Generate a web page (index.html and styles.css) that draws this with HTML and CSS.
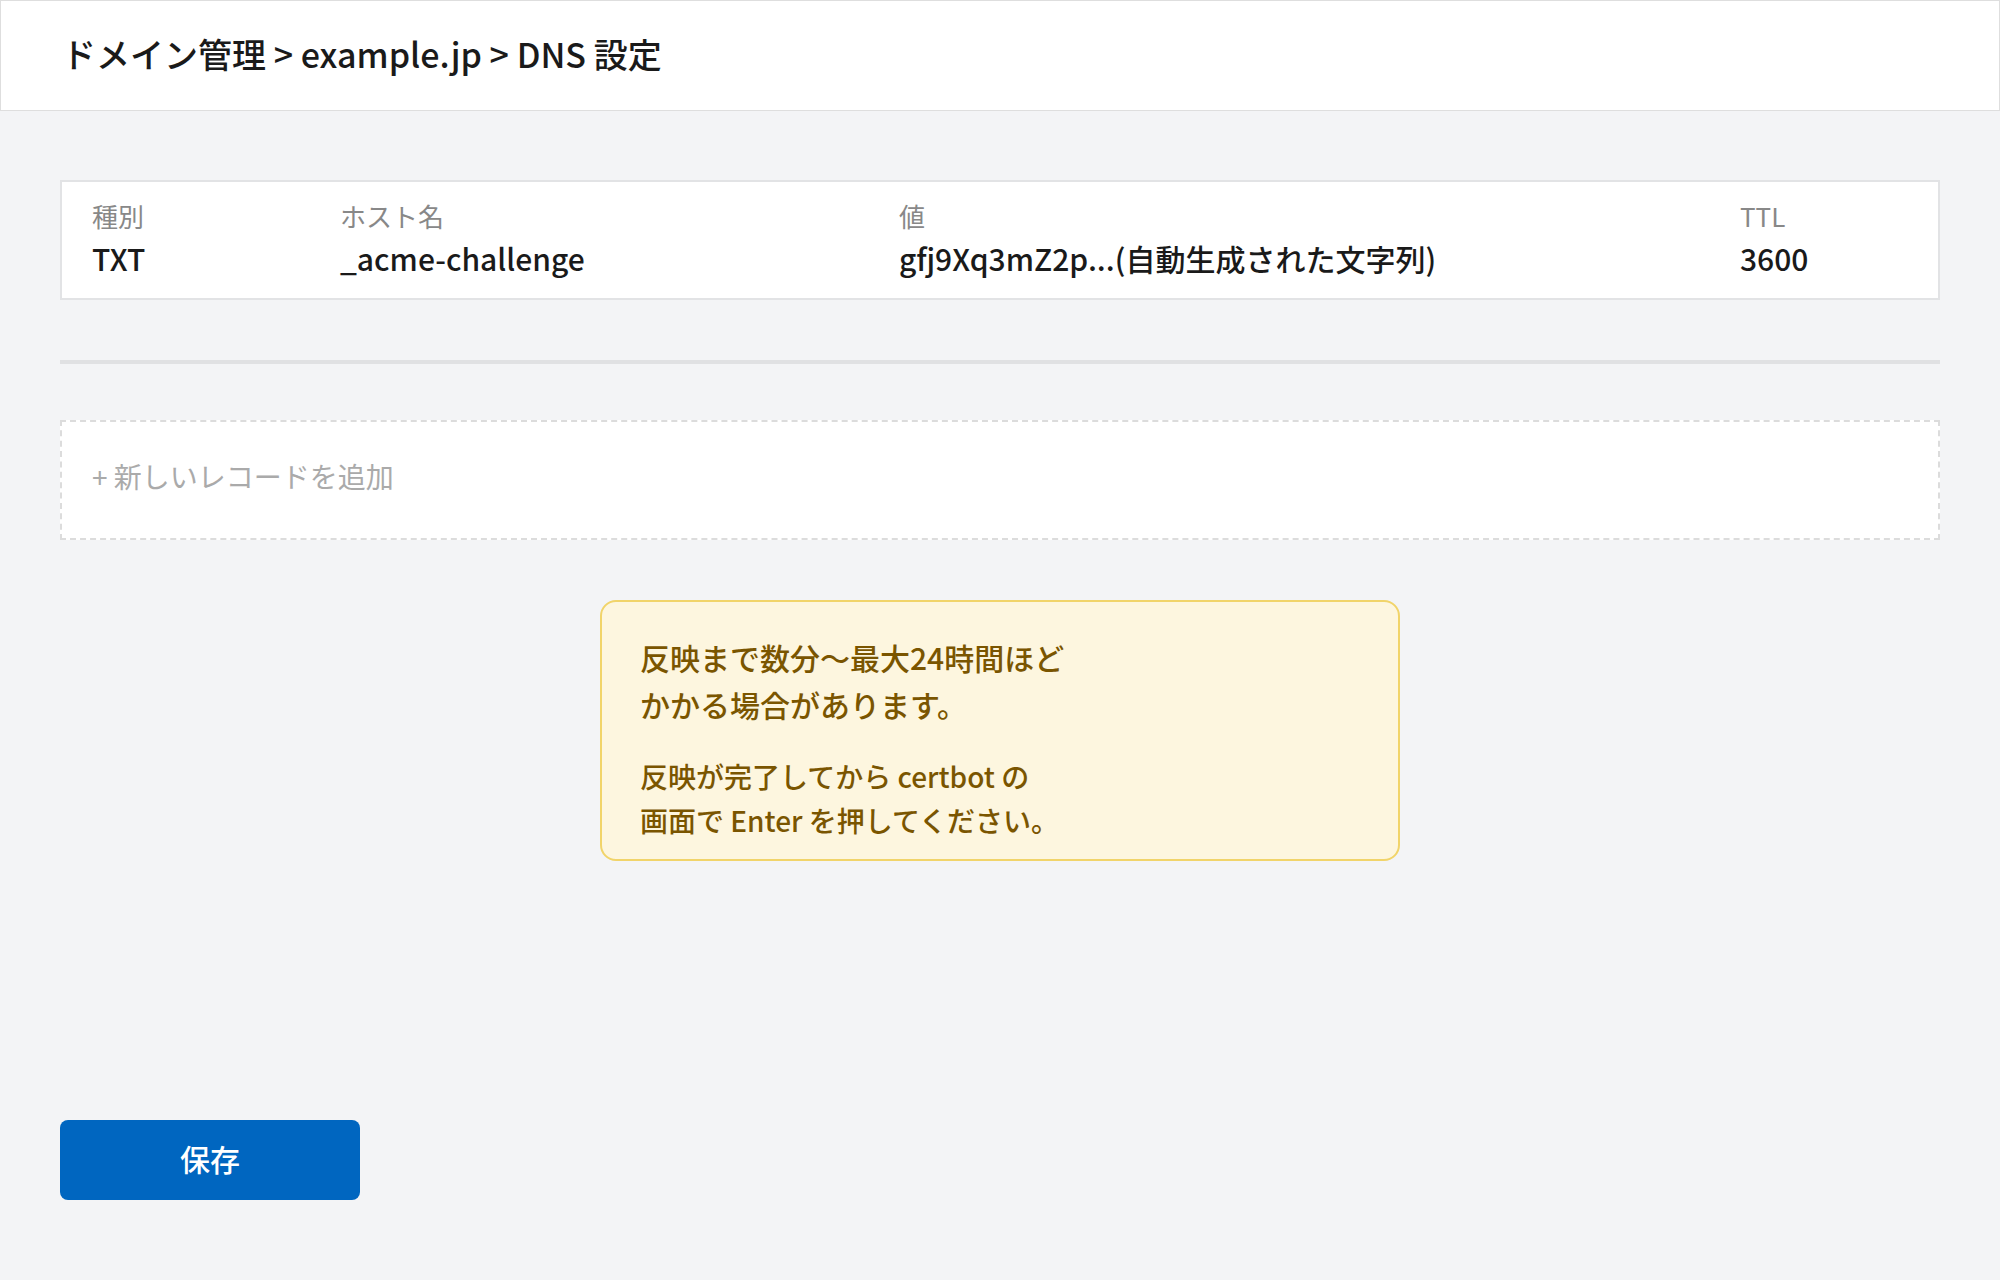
FILE: index.html
```html
<!DOCTYPE html>
<html lang="ja">

<head>
  <meta charset="UTF-8">
  <meta name="viewport" content="width=device-width, initial-scale=1.0">
  <title>DNS 設定</title>
  <link rel="stylesheet" href="styles.css">
</head>
<body>
  <header class="top-bar">
    <h1 class="crumbs">ドメイン管理 &gt; example.jp &gt; DNS 設定</h1>
  </header>
  <main class="page">
    <div class="record">
      <div class="cell">
        <span class="label">種別</span>
        <span class="value">TXT</span>
      </div>
      <div class="cell">
        <span class="label">ホスト名</span>
        <span class="value">_acme-challenge</span>
      </div>
      <div class="cell">
        <span class="label">値</span>
        <span class="value">gfj9Xq3mZ2p...(自動生成された文字列)</span>
      </div>
      <div class="cell">
        <span class="label">TTL</span>
        <span class="value">3600</span>
      </div>
    </div>
    <hr class="divider">
    <div class="add-record">+ 新しいレコードを追加</div>
    <div class="notice">
      <p class="notice-main">反映まで数分〜最大24時間ほど<br>かかる場合があります。</p>
      <p class="notice-sub">反映が完了してから certbot の<br>画面で Enter を押してください。</p>
    </div>
    <button class="save-btn">保存</button>
  </main>
</body>

</html>
```

FILE: styles.css
```css
    html, body {
      margin: 0;
      padding: 0;
    }
    body {
      background-color: #f3f4f6;
      font-family: "Noto Sans CJK JP", "Noto Sans", sans-serif;
      color: #1a1a1a;
      min-height: 100vh;
      display: flex;
      flex-direction: column;
    }
    .top-bar {
      background-color: #fff;
      border: 1px solid #dedede;
      height: 111px;
      box-sizing: border-box;
      display: flex;
      align-items: center;
      padding: 0 61px 5px;
    }
    .crumbs {
      margin: 0;
      font-size: 34px;
      font-weight: 500;
    }
    .page {
      flex: 1;
      display: flex;
      flex-direction: column;
      padding: 69px 60px 80px;
    }
    .record {
      background-color: #fff;
      border: 2px solid #e2e3e5;
      height: 120px;
      box-sizing: border-box;
      padding: 0 30px;
      display: grid;
      grid-template-columns: 248px 559px 1fr 168px;
      align-items: center;
    }
    .cell {
      display: flex;
      flex-direction: column;
    }
    .label {
      font-size: 26px;
      color: #888;
      line-height: 36px;
      margin-top: -2px;
    }
    .value {
      font-size: 30px;
      line-height: 44px;
      font-weight: 500;
      color: #1a1a1a;
      margin-top: 2px;
    }
    .divider {
      border: none;
      height: 4px;
      background-color: #e0e1e3;
      margin: 60px 0 56px;
    }
    .add-record {
      background-color: #fff;
      border: 2px dashed #dcdcdc;
      height: 120px;
      box-sizing: border-box;
      display: flex;
      align-items: center;
      padding: 0 30px 9px;
      font-size: 28px;
      color: #aaa;
    }
    .notice {
      align-self: center;
      width: 800px;
      box-sizing: border-box;
      margin-top: 60px;
      background-color: #fdf6df;
      border: 2px solid #f1d46a;
      border-radius: 16px;
      padding: 32px 38px 17px;
      color: #7a5500;
      font-weight: 500;
    }
    .notice p {
      margin: 0;
    }
    .notice-main {
      font-size: 30px;
      line-height: 47px;
    }
    .notice-sub {
      font-size: 28px;
      line-height: 44px;
      margin-top: 26px !important;
    }
    .save-btn {
      margin-top: auto;
      width: 300px;
      height: 80px;
      border: none;
      border-radius: 8px;
      background-color: #0066c0;
      color: #fff;
      font-family: "Noto Sans CJK JP", sans-serif;
      font-size: 30px;
      font-weight: 500;
      padding: 0 0 4px;
      cursor: pointer;
    }
```
